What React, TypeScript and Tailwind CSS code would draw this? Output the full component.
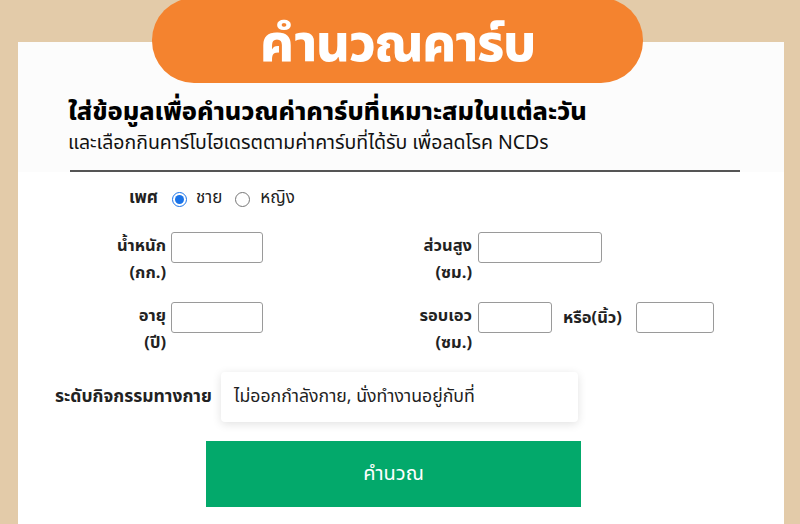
import { useState } from 'react';

const thai = { fontFamily: '"Noto Sans Thai", "Noto Sans", Tahoma, "DejaVu Sans", sans-serif' };

function Field({ w }: { w: string }) {
  return <input type="text" className={`${w} h-[31px] rounded-[3px] border border-[#9a9a9a] bg-white px-2 text-sm outline-none`} />;
}

function Label({ top, bottom, w }: { top: string; bottom: string; w: string }) {
  return (
    <div className={`${w} shrink-0 text-right text-[16.5px] font-bold leading-[27px] text-[#222]`}>
      <div>{top}</div>
      <div>{bottom}</div>
    </div>
  );
}

export default function App() {
  const [sex, setSex] = useState<'m' | 'f'>('m');

  return (
    <div className="h-[524px] w-[800px] overflow-hidden bg-[#e3cba9]" style={thai}>
      <div className="relative z-10 ml-[152px] flex h-[85px] w-[491px] -translate-y-[2px] items-center justify-center rounded-[42px] bg-[#f4832f]">
        <span className="pt-[8px] text-[52px] font-extrabold leading-none tracking-tight text-white">คำนวณคาร์บ</span>
      </div>

      <div className="-mt-[43px] ml-[18px] h-[500px] w-[766px] bg-white">
        <div className="bg-[#fcfcfc] pl-[50px] pt-[55px]">
          <h1 className="text-[25.3px] font-extrabold leading-[30px] text-black">ใส่ข้อมูลเพื่อคำนวณค่าคาร์บที่เหมาะสมในแต่ละวัน</h1>
          <p className="mt-[4px] text-[19.5px] leading-[25px] text-[#111]">และเลือกกินคาร์โบไฮเดรตตามค่าคาร์บที่ได้รับ เพื่อลดโรค NCDs</p>
          <div className="ml-[2px] mt-[14px] h-[2px] w-[670px] bg-[#555]" />
        </div>

        <div className="pt-[13px]">
          <div className="flex h-[28px] items-center text-[17px] text-[#222]">
            <span className="w-[140px] text-right font-bold">เพศ</span>
            <label className="ml-[14px] flex items-center">
              <input type="radio" checked={sex === 'm'} onChange={() => setSex('m')} className="h-[15px] w-[15px] accent-[#1a73e8]" />
              <span className="ml-[9px]">ชาย</span>
            </label>
            <label className="ml-[13px] flex items-center">
              <input type="radio" checked={sex === 'f'} onChange={() => setSex('f')} className="h-[15px] w-[15px]" />
              <span className="ml-[10px]">หญิง</span>
            </label>
          </div>

          <div className="mt-[19px] flex items-start">
            <Label w="w-[148px]" top="น้ำหนัก" bottom="(กก.)" />
            <div className="ml-[5px]"><Field w="w-[92px]" /></div>
            <Label w="w-[209px]" top="ส่วนสูง" bottom="(ซม.)" />
            <div className="ml-[6px]"><Field w="w-[124px]" /></div>
          </div>

          <div className="mt-[16px] flex items-start">
            <Label w="w-[148px]" top="อายุ" bottom="(ปี)" />
            <div className="ml-[5px]"><Field w="w-[92px]" /></div>
            <Label w="w-[209px]" top="รอบเอว" bottom="(ซม.)" />
            <div className="ml-[6px]"><Field w="w-[74px]" /></div>
            <span className="ml-[11px] text-[16.5px] font-bold leading-[31px] text-[#222]">หรือ(นิ้ว)</span>
            <div className="ml-[14px]"><Field w="w-[78px]" /></div>
          </div>

          <div className="mt-[16px] flex items-center">
            <span className="ml-[37px] w-[166px] whitespace-nowrap text-[17.5px] font-bold text-[#222]">ระดับกิจกรรมทางกาย</span>
            <div className="flex h-[50px] w-[357px] items-center rounded-[4px] bg-white pl-[13px] text-[17.7px] text-[#222] shadow-[0_2px_10px_rgba(0,0,0,0.12)]">
              ไม่ออกกำลังกาย, นั่งทำงานอยู่กับที่
            </div>
          </div>

          <button className="ml-[188px] mt-[19px] flex h-[66px] w-[375px] items-center justify-center bg-[#03a96b] text-[20px] text-white">
            คำนวณ
          </button>
        </div>
      </div>
    </div>
  );
}
